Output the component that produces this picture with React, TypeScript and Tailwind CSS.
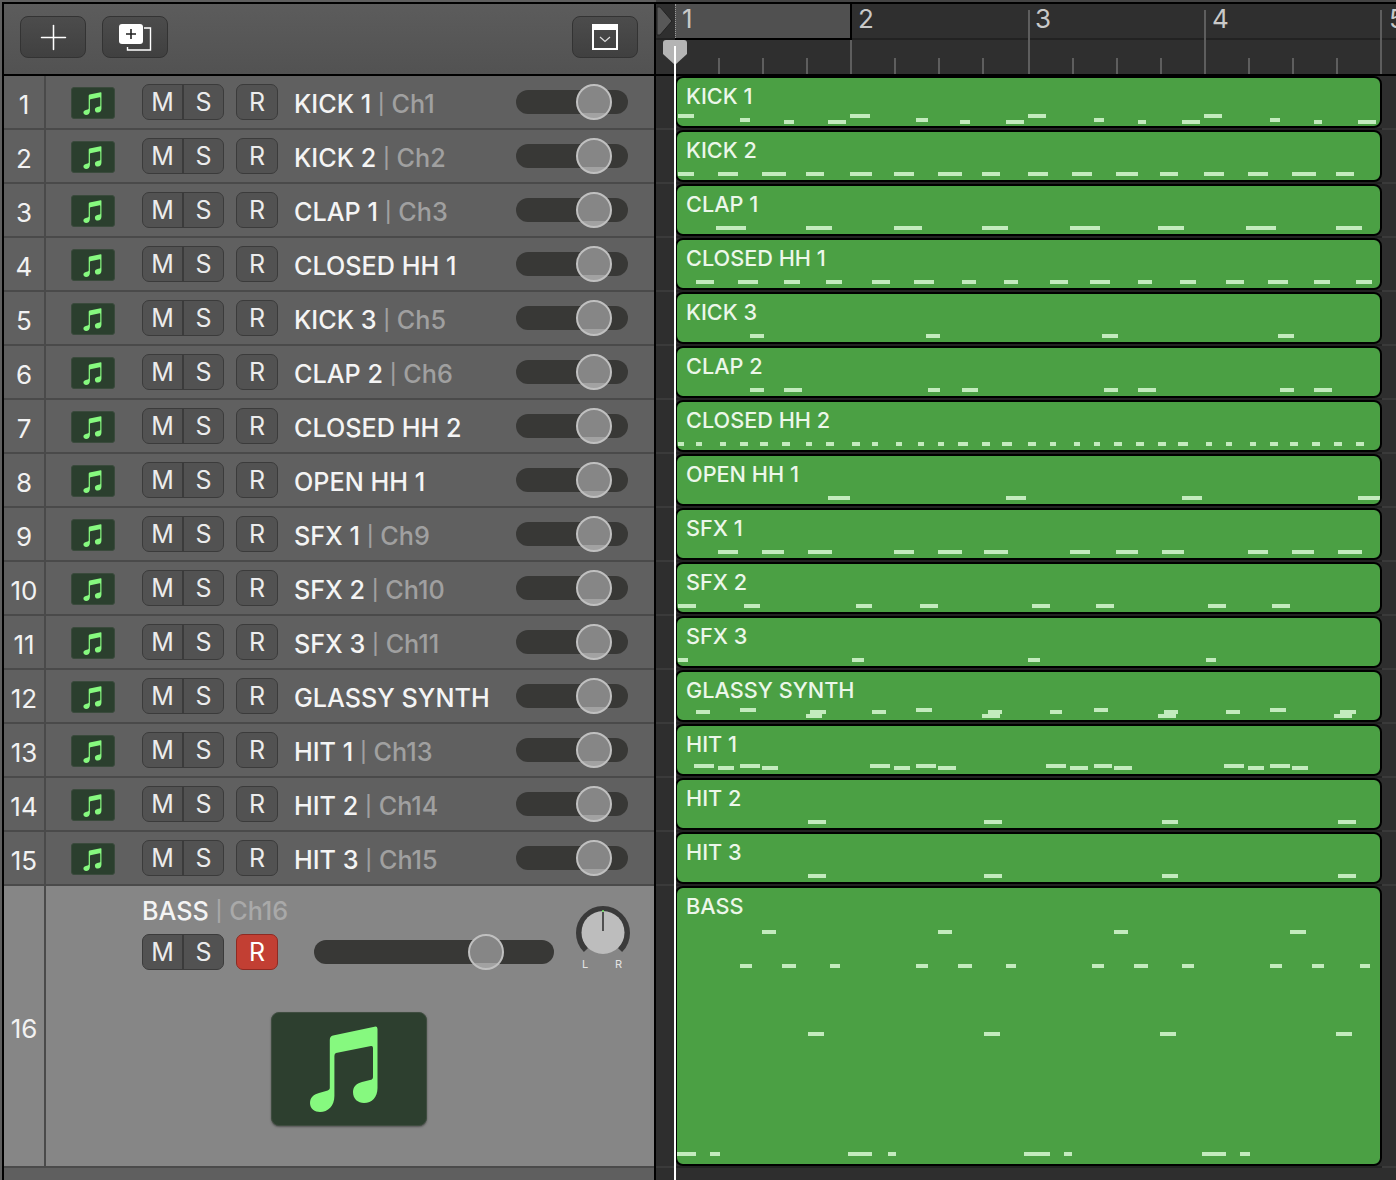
import { Plus } from 'lucide-react'

type Note = [number, number, number?]

const tracks: { n: number; name: string; ch?: string; notes: Note[] }[] = [
  { n: 1, name: 'KICK 1', ch: 'Ch1', notes: [[678, 694, 38], [740, 750, 42], [784, 794, 44], [828, 846, 44], [850, 870, 38], [916, 928, 42], [960, 970, 44], [1006, 1024, 44], [1028, 1046, 38], [1094, 1104, 42], [1138, 1146, 44], [1182, 1200, 44], [1204, 1222, 38], [1270, 1280, 42], [1314, 1322, 44], [1358, 1376, 44]] },
  { n: 2, name: 'KICK 2', ch: 'Ch2', notes: [[678, 694], [718, 738], [762, 786], [806, 824], [850, 872], [894, 914], [938, 962], [982, 1000], [1028, 1048], [1072, 1092], [1116, 1138], [1160, 1178], [1204, 1224], [1248, 1268], [1292, 1316], [1336, 1354]] },
  { n: 3, name: 'CLAP 1', ch: 'Ch3', notes: [[716, 746], [806, 832], [894, 922], [982, 1008], [1070, 1100], [1158, 1184], [1246, 1276], [1336, 1362]] },
  { n: 4, name: 'CLOSED HH 1', notes: [[696, 714], [738, 758], [784, 800], [826, 842], [872, 890], [914, 934], [962, 976], [1004, 1018], [1050, 1068], [1090, 1110], [1138, 1152], [1180, 1196], [1226, 1244], [1268, 1288], [1314, 1330], [1356, 1372]] },
  { n: 5, name: 'KICK 3', ch: 'Ch5', notes: [[750, 764], [926, 940], [1102, 1118], [1278, 1294]] },
  { n: 6, name: 'CLAP 2', ch: 'Ch6', notes: [[750, 764], [784, 802], [928, 940], [962, 978], [1104, 1118], [1138, 1156], [1280, 1294], [1314, 1332]] },
  { n: 7, name: 'CLOSED HH 2', notes: [[678, 684], [696, 702], [720, 726], [740, 748], [760, 768], [782, 790], [806, 812], [826, 834], [852, 860], [872, 878], [896, 902], [918, 924], [938, 944], [958, 968], [982, 990], [1002, 1012], [1028, 1036], [1050, 1056], [1074, 1080], [1094, 1100], [1114, 1122], [1136, 1144], [1158, 1166], [1178, 1188], [1206, 1212], [1226, 1232], [1250, 1256], [1270, 1278], [1290, 1298], [1312, 1320], [1334, 1342], [1356, 1364]] },
  { n: 8, name: 'OPEN HH 1', notes: [[828, 850], [1006, 1026], [1182, 1202], [1358, 1380]] },
  { n: 9, name: 'SFX 1', ch: 'Ch9', notes: [[718, 738], [762, 784], [808, 832], [894, 914], [938, 962], [984, 1008], [1070, 1090], [1116, 1138], [1162, 1184], [1248, 1268], [1292, 1314], [1338, 1362]] },
  { n: 10, name: 'SFX 2', ch: 'Ch10', notes: [[678, 696], [744, 760], [856, 872], [920, 938], [1032, 1050], [1096, 1114], [1208, 1226], [1272, 1290]] },
  { n: 11, name: 'SFX 3', ch: 'Ch11', notes: [[678, 688], [852, 864], [1028, 1040], [1206, 1216]] },
  { n: 12, name: 'GLASSY SYNTH', notes: [[696, 710, 40], [740, 756, 38], [810, 826, 40], [806, 822, 44], [872, 886, 40], [916, 932, 38], [988, 1002, 40], [982, 1000, 44], [1050, 1062, 40], [1094, 1108, 38], [1164, 1178, 40], [1158, 1176, 44], [1226, 1240, 40], [1270, 1286, 38], [1340, 1356, 40], [1334, 1352, 44]] },
  { n: 13, name: 'HIT 1', ch: 'Ch13', notes: [[694, 714, 40], [718, 734, 42], [740, 760, 40], [762, 778, 42], [870, 890, 40], [894, 910, 42], [916, 936, 40], [938, 956, 42], [1046, 1066, 40], [1070, 1088, 42], [1094, 1112, 40], [1114, 1132, 42], [1224, 1244, 40], [1248, 1264, 42], [1270, 1290, 40], [1292, 1308, 42]] },
  { n: 14, name: 'HIT 2', ch: 'Ch14', notes: [[808, 826], [984, 1002], [1162, 1178], [1338, 1356]] },
  { n: 15, name: 'HIT 3', ch: 'Ch15', notes: [[808, 826], [984, 1002], [1162, 1178], [1338, 1356]] },
]

const bassNotes: Note[] = [
  [762, 776, 44], [938, 952, 44], [1114, 1128, 44], [1290, 1306, 44],
  [740, 752, 78], [782, 796, 78], [830, 840, 78], [916, 928, 78], [958, 972, 78], [1006, 1016, 78], [1092, 1104, 78], [1134, 1148, 78], [1182, 1194, 78], [1270, 1282, 78], [1312, 1324, 78], [1360, 1370, 78],
  [808, 824, 146], [984, 1000, 146], [1160, 1176, 146], [1336, 1352, 146],
  [677, 696, 266], [710, 720, 266], [848, 872, 266], [888, 896, 266], [1024, 1050, 266], [1064, 1072, 266], [1202, 1226, 266], [1240, 1250, 266],
]

const bars = [1028, 1204, 1380]
const beats = [718, 762, 806, 894, 938, 982, 1072, 1116, 1160, 1248, 1292, 1336]

function NoteIcon({ className }: { className: string }) {
  return (
    <svg viewBox="0 0 68 86" className={className} fill="#86f97f">
      <path d="M67.5 3Q67.5 0 64.5 .7L23 9.5Q19.8 10.2 19.8 14V62Q19.8 64 16 65L9 67C3 68.5 0 72 0 77C0 83 5 86 10 86C18 86 24.4 80 24.4 70V30Q24.4 27.5 26 27L61 20Q63 19.7 63 22V51Q63 53.5 60 54L52 56C46 57.5 43 61 43 66C43 73 48 77 54 77C62 77 67.5 71 67.5 62Z" />
    </svg>
  )
}

function MuteSolo({ rec }: { rec?: boolean }) {
  return (
    <div className="flex gap-[12px] text-[25px] leading-none text-[#ececec] shrink-0">
      <div className="flex w-[82px] h-[36px] rounded-[7px] border border-[#3b3b3b] bg-[#525252] overflow-hidden">
        <div className="w-[41px] flex items-center justify-center border-r-2 border-[#3b3b3b]">M</div>
        <div className="flex-1 flex items-center justify-center">S</div>
      </div>
      <div className={`w-[42px] h-[36px] rounded-[7px] border flex items-center justify-center ${rec ? 'bg-[#c23f33] border-[#8e2a22] text-white' : 'bg-[#525252] border-[#3b3b3b]'}`}>R</div>
    </div>
  )
}

function Slider({ width, knob }: { width: string; knob: string }) {
  return (
    <div className={`relative h-[24px] rounded-full bg-[#383836] shrink-0 ${width}`}>
      <div className={`absolute top-[-6px] h-[36px] w-[36px] rounded-full border-2 border-[#c0c0c0] bg-[linear-gradient(#868686_0%,#868686_84%,#a2a2a2_84%)] ${knob}`} />
    </div>
  )
}

function Notes({ notes }: { notes: Note[] }) {
  return (
    <>
      {notes.map(([a, b, y = 42], i) => (
        <div key={i} className="absolute h-[4px] bg-[#c3ebbe]" style={{ left: a - 677, width: b - a, top: y - 2 }} />
      ))}
    </>
  )
}

function Channel({ ch, dark }: { ch: string; dark?: boolean }) {
  return (
    <span className={dark ? 'text-[#a9a9a9]' : 'text-[#a0a0a0]'}>
      {' '}
      <span className="text-[20px] align-[2px]">|</span> {ch}
    </span>
  )
}

function TrackRow({ n, name, ch }: { n: number; name: string; ch?: string }) {
  return (
    <div className="h-[54px] flex items-center bg-[#606060] border-b-2 border-[#4a4a4a]">
      <div className="w-[42px] h-full border-r-2 border-[#4a4a4a] flex items-center justify-center pt-[4px] text-[26px] text-[#f2f2f2]">{n}</div>
      <div className="ml-[25px] mt-[2px] w-[44px] h-[32px] rounded-[3px] bg-[#2b3f2e] border border-[#3a4a3c] flex items-center justify-center pr-[2px] shrink-0">
        <NoteIcon className="w-[19px] h-[23px]" />
      </div>
      <div className="ml-[27px]"><MuteSolo /></div>
      <div className="ml-[16px] pt-[3px] flex-1 text-[25.2px] leading-[30px] font-[450] whitespace-nowrap text-[#f4f4f4]">
        {name}
        {ch && <Channel ch={ch} />}
      </div>
      <div className="mr-[26px]"><Slider width="w-[112px]" knob="left-[60px]" /></div>
    </div>
  )
}

function LeftPanel() {
  return (
    <div className="w-[656px] h-full shrink-0 pl-[2px] pt-[2px] bg-[#5f5f5f]">
      <div className="h-full flex flex-col border-l-2 border-t-2 border-r-2 border-black">
        <div className="h-[72px] shrink-0 flex items-center px-[16px] pb-[4px] gap-[16px] border-b-2 border-black bg-[linear-gradient(#5c5c5c,#525252)]">
          <button className="w-[66px] h-[42px] rounded-[8px] border border-[#333] bg-[linear-gradient(#4c4c4c,#404040)] flex items-center justify-center text-white">
            <Plus size={41} strokeWidth={0.9} />
          </button>
          <button className="w-[66px] h-[42px] rounded-[8px] border border-[#333] bg-[linear-gradient(#4c4c4c,#404040)] flex items-center justify-center">
            <svg width="34" height="28" viewBox="0 0 34 28" fill="none">
              <path d="M26 5h6.5v22h-23v-3" stroke="#fff" strokeWidth="1.4" />
              <rect x="1" y="1" width="24" height="20" rx="3" fill="#fff" />
              <path d="M13 6v10M8 11h10" stroke="#222" strokeWidth="1.6" />
            </svg>
          </button>
          <button className="ml-auto w-[66px] h-[42px] rounded-[8px] border border-[#333] bg-[linear-gradient(#4c4c4c,#404040)] flex items-center justify-center">
            <svg width="26" height="26" viewBox="0 0 26 26" fill="none">
              <rect x="1" y="1" width="24" height="24" stroke="#fff" strokeWidth="2" />
              <rect x="1" y="1" width="24" height="5" fill="#fff" />
              <path d="M8 13l5 4.5 5-4.5" stroke="#ddd" strokeWidth="1.2" />
            </svg>
          </button>
        </div>
        {tracks.map((t) => (
          <TrackRow key={t.n} n={t.n} name={t.name} ch={t.ch} />
        ))}
        <div className="h-[282px] shrink-0 flex bg-[#868686] border-b-2 border-[#4a4a4a]">
          <div className="w-[42px] border-r-2 border-[#4a4a4a] flex items-center justify-center pt-[4px] text-[26px] text-[#f2f2f2]">16</div>
          <div className="flex-1 flex flex-col">
            <div className="flex pl-[96px]">
              <div className="pt-[10px]">
                <div className="h-[30px] leading-[30px] text-[25.2px] font-[450] whitespace-nowrap text-[#f4f4f4]">
                  BASS
                  <Channel ch="Ch16" dark />
                </div>
                <div className="mt-[8px] flex items-center">
                  <MuteSolo rec />
                  <div className="ml-[36px]"><Slider width="w-[240px]" knob="left-[154px]" /></div>
                </div>
              </div>
              <div className="ml-[22px] pt-[20px] w-[54px]">
                <svg width="54" height="50" viewBox="0 0 54 50" fill="none">
                  <path d="M10 44A24 24 0 1 1 44 44" stroke="#3a3a3a" strokeWidth="6" />
                  <circle cx="27" cy="26.5" r="21.5" fill="#bdbdbd" />
                  <path d="M27 6v19" stroke="#222" strokeWidth="1.4" />
                  <path d="M27 4v2" stroke="#6df05f" strokeWidth="1.4" />
                </svg>
                <div className="h-[16px] flex justify-between pl-[6px] pr-[8px] items-center text-[11px] text-[#e4e4e4]">
                  <span>L</span>
                  <span>R</span>
                </div>
              </div>
            </div>
            <div className="mt-[40px] ml-[225px] w-[156px] h-[114px] rounded-[8px] bg-[#2d3f2f] border border-[#3f4d40] shadow-[0_1px_2px_#555] flex items-center justify-center">
              <NoteIcon className="w-[68px] h-[86px] mr-[10px]" />
            </div>
          </div>
        </div>
        <div className="flex-1" />
      </div>
    </div>
  )
}

function Ruler() {
  return (
    <div className="relative h-[74px] shrink-0 bg-[#2f2f2f] border-t-2 border-black border-b-2 overflow-hidden">
      <div className="h-[36px] flex">
        <div className="w-[19px] flex items-center border-b-2 border-[#222]">
          <svg width="17" height="30" viewBox="0 0 17 30">
            <path d="M1 1h3L16 15 4 29H1Z" fill="#585858" stroke="#222" strokeWidth="1" />
          </svg>
        </div>
        <div className="relative w-[177px] shrink-0 bg-[#505050] border-r-2 border-b-2 border-black pl-[7px] text-[26px] leading-[30px] text-[#c9c9c9]">
          <div className="absolute left-0 top-0 bottom-0 border-l border-dotted border-[#9a9a9a]" />
          1
        </div>
        {[2, 3, 4, 5].map((b) => (
          <div key={b} className="w-[177px] shrink-0 pl-[6px] border-b-2 border-[#222] text-[26px] leading-[30px] text-[#c9c9c9]">{b}</div>
        ))}
      </div>
      {bars.map((x) => (
        <div key={x} className="absolute top-[6px] bottom-0 w-[2px] bg-[#5e5e5e]" style={{ left: x - 656 }} />
      ))}
      <div className="absolute top-[36px] bottom-0 w-[2px] bg-[#5e5e5e] left-[194px]" />
      {beats.map((x) => (
        <div key={x} className="absolute bottom-0 h-[16px] w-[2px] bg-[#5e5e5e]" style={{ left: x - 656 }} />
      ))}
    </div>
  )
}

function Region({ name, notes, tall }: { name: string; notes: Note[]; tall?: boolean }) {
  return (
    <div className="bg-[#2e2e2e]">
      <div className={`ml-[19px] w-[707px] border-2 border-black rounded-[8px] bg-[#4ba044] relative overflow-hidden ${tall ? 'h-[280px]' : 'h-[52px]'}`}>
        <div className="pl-[9px] pt-[4px] text-[21.7px] font-[450] leading-[28px] text-[#ecf7ea] whitespace-nowrap">{name}</div>
        <Notes notes={notes} />
      </div>
      <div className="h-[2px] bg-[#3a3a3a]">
        <div className="ml-[19px] w-[707px] h-full bg-[#222]" />
      </div>
    </div>
  )
}

export default function App() {
  return (
    <div className="w-[1396px] h-[1180px] flex overflow-hidden bg-[#2e2e2e] [font-family:Inter,'Liberation_Sans',sans-serif]">
      <LeftPanel />
      <div className="relative flex-1 flex flex-col pt-[2px] bg-[#2e2e2e]">
        <div className="absolute top-0 left-0 right-0 h-[2px] bg-[#444]" />
        <Ruler />
        {tracks.map((t) => (
          <Region key={t.n} name={t.name} notes={t.notes} />
        ))}
        <Region name="BASS" notes={bassNotes} tall />
        {/* playhead */}
        <div className="absolute left-[18px] top-[46px] bottom-0 w-[2px] bg-white" />
        <svg className="absolute left-[7px] top-[40px]" width="24" height="25" viewBox="0 0 24 25">
          <path d="M3 0h18a3 3 0 0 1 3 3v11L12 25 0 14V3a3 3 0 0 1 3-3Z" fill="#b4b4b4" />
          <path d="M11 6h2v19h-2z" fill="#fff" />
        </svg>
      </div>
    </div>
  )
}
